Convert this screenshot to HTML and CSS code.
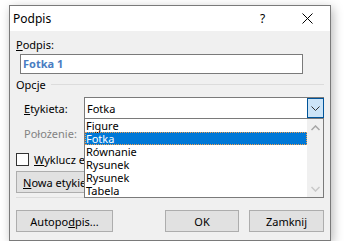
FILE: index.html
```html
<!DOCTYPE html>
<html lang="pl">
<head>
    <meta charset="UTF-8">
    <title>Podpis</title>
    <link rel="stylesheet" href="styles.css">
</head>
<body>
    <div class="dialog">
        <div class="titlebar">
            <span class="title">Podpis</span>
            <span class="help">?</span>
            <span class="close">
                <svg width="11" height="11" viewBox="0 0 11 11"><path d="M0.5 0.5 L10.5 10.5 M10.5 0.5 L0.5 10.5" stroke="#000" stroke-width="1"/></svg>
            </span>
        </div>

        <div class="content">
            <div class="field-label"><u>P</u>odpis:</div>
            <div class="caption-input">Fotka 1</div>

            <div class="group-title">
                <span>Opcje</span>
                <span class="rule"></span>
            </div>

            <div class="row">
                <span class="row-label"><u>E</u>tykieta:</span>
                <div class="select">
                    <span class="select-value">Fotka</span>
                    <span class="select-btn">
                        <svg width="9" height="5" viewBox="0 0 9 5"><path d="M0.5 0.5 L4.5 4.5 L8.5 0.5" fill="none" stroke="#333" stroke-width="1"/></svg>
                    </span>
                </div>
            </div>

            <div class="row row-disabled">
                <span class="row-label">Położenie:</span>
            </div>

            <div class="check-row">
                <span class="checkbox"></span>
                <span><u>W</u>yklucz etykietę z podpisu</span>
            </div>

            <div class="btn-row">
                <button class="btn btn-new"><u>N</u>owa etykieta...</button>
            </div>

            <div class="separator"></div>

            <div class="footer">
                <button class="btn btn-auto">Autopo<u>d</u>pis...</button>
                <button class="btn btn-ok">OK</button>
                <button class="btn btn-close">Zamknij</button>
            </div>
        </div>

        <!-- open list of the Etykieta select, drawn over the rows below -->
        <div class="dropdown">
            <ul class="options">
                <li>Figure</li>
                <li class="selected">Fotka</li>
                <li>Równanie</li>
                <li>Rysunek</li>
                <li>Rysunek</li>
                <li>Tabela</li>
            </ul>
            <div class="scrollbar">
                <svg width="9" height="6" viewBox="0 0 9 6"><path d="M0.5 5 L4.5 1 L8.5 5" fill="none" stroke="#a6a6a6" stroke-width="1.5"/></svg>
                <svg width="9" height="6" viewBox="0 0 9 6"><path d="M0.5 1 L4.5 5 L8.5 1" fill="none" stroke="#c8c8c8" stroke-width="1.5"/></svg>
            </div>
        </div>
    </div>
</body>
</html>
```

FILE: styles.css
```css
body {
    margin: 0;
    background: #fff;
    font-family: "Noto Sans", "Segoe UI", sans-serif;
    font-size: 11px;
    color: #000;
}
u {
    text-decoration: underline;
    text-underline-offset: 1px;
}
.dialog {
    position: relative;
    margin: 5px 0 0 9px;
    width: 320px;
    height: 234px;
    border: 1px solid #7a7a7a;
    background: #f0f0f0;
    box-shadow: 2px 3px 10px rgba(0, 0, 0, 0.28);
}
.titlebar {
    display: flex;
    align-items: center;
    height: 25px;
    background: #fff;
    padding-left: 3px;
}
.title {
    font-size: 12px;
    flex: 1;
}
.help {
    font-size: 12px;
    width: 12px;
    margin-right: 30px;
}
.close {
    display: flex;
    width: 11px;
    margin-right: 17px;
}
.content {
    padding: 6px 6px 0;
}
.field-label {
    height: 15px;
    line-height: 15px;
}
.caption-input {
    margin: 2px 0 0 4px;
    height: 18px;
    line-height: 18px;
    border: 1px solid #7a7a7a;
    background: #fff;
    padding-left: 2px;
    width: 279px;
    color: #4a7dc2;
    font-weight: bold;
}
.group-title {
    display: flex;
    align-items: center;
    margin-top: 3px;
    height: 15px;
}
.group-title .rule {
    flex: 1;
    height: 1px;
    background: #dcdcdc;
    margin-left: 5px;
}
.row {
    display: flex;
    align-items: center;
    margin-top: 5px;
    height: 22px;
    padding-left: 8px;
}
.row-label {
    width: 60px;
}
.row-disabled {
    height: 18px;
    color: #838383;
}
.select {
    display: flex;
    align-items: center;
    width: 238px;
    height: 20px;
    border: 1px solid #7a7a7a;
    background: #fff;
}
.select-value {
    flex: 1;
    padding-left: 2px;
}
.select-btn {
    display: flex;
    align-items: center;
    justify-content: center;
    width: 17px;
    height: 20px;
    margin-right: -1px;
    border: 1px solid #005499;
    background: #cce4f7;
    box-sizing: border-box;
}
.check-row {
    display: flex;
    align-items: center;
    margin-top: 11px;
    height: 13px;
}
.checkbox {
    width: 11px;
    height: 11px;
    border: 1px solid #333;
    background: #fff;
    margin-right: 5px;
}
.btn-row {
    margin-top: 5px;
    display: flex;
}
.btn {
    font-family: inherit;
    font-size: 11px;
    height: 22px;
    padding: 0;
    background: #e1e1e1;
    border: 1px solid #adadad;
    color: #000;
}
.btn-new {
    width: 105px;
    text-align: left;
    padding-left: 6px;
}
.separator {
    margin-top: 4px;
    height: 1px;
    background: #dcdcdc;
    width: 307px;
}
.footer {
    display: flex;
    margin-top: 12px;
}
.btn-auto {
    width: 97px;
}
.btn-ok {
    width: 74px;
    margin-left: 52px;
}
.btn-close {
    width: 75px;
    margin-left: 10px;
}
.dropdown {
    position: absolute;
    left: 74px;
    top: 112px;
    width: 238px;
    height: 78px;
    border: 1px solid #7a7a7a;
    background: #fff;
    display: flex;
}
.options {
    list-style: none;
    margin: 0;
    padding: 0;
    flex: 1;
}
.options li {
    height: 13px;
    line-height: 13px;
    padding-left: 1px;
}
.options li.selected {
    background: #0078d7;
    color: #fff;
    outline: 1px dotted #f0a050;
    outline-offset: -1px;
}
.scrollbar {
    width: 16px;
    background: #f0f0f0;
    display: flex;
    flex-direction: column;
    justify-content: space-between;
    align-items: center;
    padding: 6px 0 5px;
}
```
